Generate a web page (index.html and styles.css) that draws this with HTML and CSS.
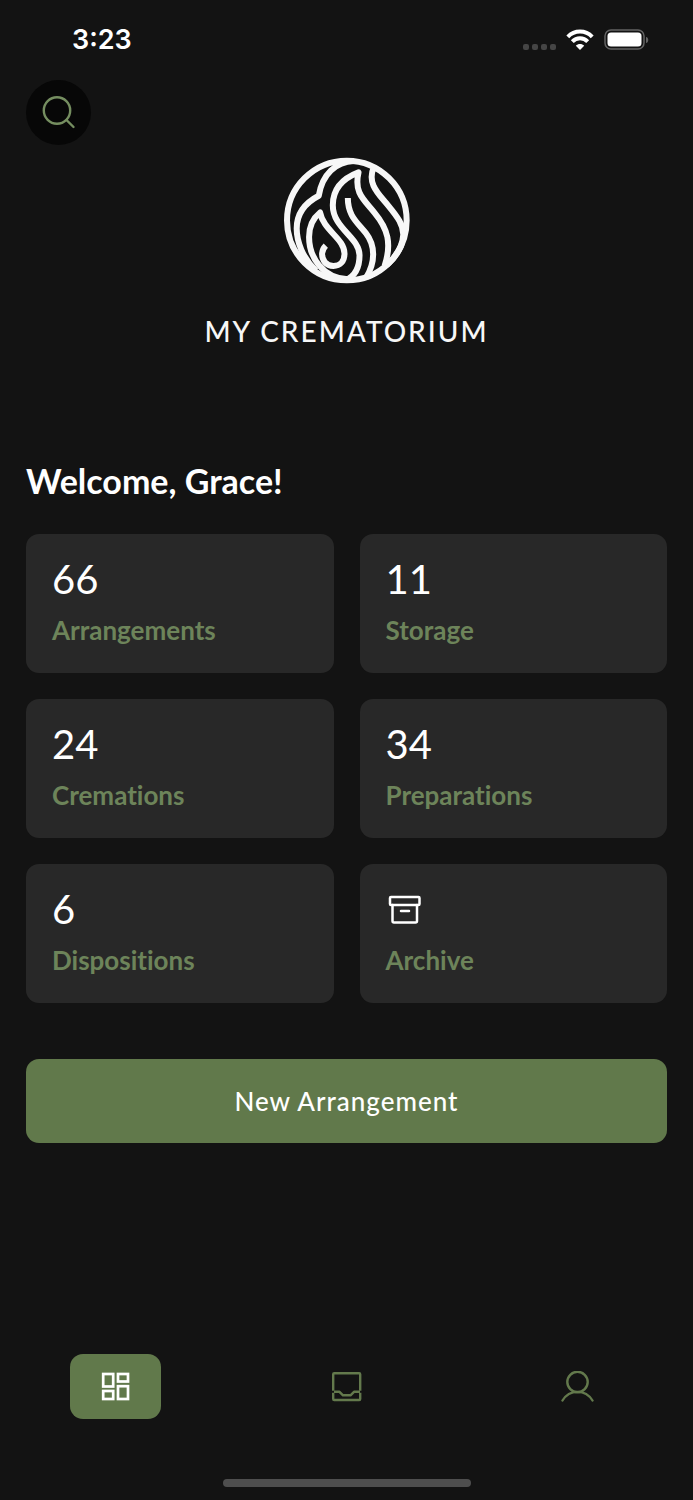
FILE: index.html
```html
<!DOCTYPE html>
<html lang="en">
<head>
	<meta charset="UTF-8">
	<meta name="viewport" content="width=device-width, initial-scale=1">
	<title>My Crematorium</title>
	<link rel="stylesheet" href="styles.css">
</head>
<body>
	<div class="status">
		<span class="time">3:23</span>
		<div class="signals">
			<div class="dots"><i></i><i></i><i></i><i></i></div>
			<svg width="28" height="22" viewBox="0 0 28 22" fill="none" stroke="#fff" stroke-width="4">
				<path d="M1.800 7.800C8.500 0.800 19.500 0.800 26.200 7.800"/>
				<path d="M6.300 12.600C10.500 8.200 17.500 8.200 21.700 12.600"/>
				<path d="M14 21L9.800 16.700C12 14.500 16 14.500 18.200 16.700Z" fill="#fff" stroke="none"/>
			</svg>
			<svg width="46" height="22" viewBox="0 0 46 22">
				<rect x="1" y="1" width="39" height="19" rx="6" fill="none" stroke="#636363" stroke-width="1.500"/>
				<rect x="3.500" y="3.500" width="34" height="14" rx="3.500" fill="#fff"/>
				<path d="M42 8c3 0 3 6 0 6z" fill="#636363"/>
			</svg>
		</div>
	</div>

	<header class="header">
		<button class="search" aria-label="Search">
			<svg width="34" height="34" viewBox="0 0 34 34" fill="none" stroke="#758e60" stroke-width="2.400" stroke-linecap="round">
				<circle cx="15" cy="14.500" r="13.200"/>
				<path d="M24.500 24L31.500 31"/>
			</svg>
		</button>
		<div class="brand">
			<svg class="logo" viewBox="38 36 380 380" fill="none" stroke="#f7f7f7" stroke-width="18" stroke-linejoin="round">
				<circle cx="229" cy="226" r="179"/>
				<!-- outer flame -->
				<path d="M250 48C196 50 155 88 145 152C101 175 79 205 79 250C79 288 96 338 137 376"/>
				<!-- inner flame with the curl -->
				<path d="M232 402C156 398 116 335 116 275C116 240 128 219 149 202C159 256 222 280 222 325C222 349 208 362 189 362C167 362 154 345 155 324C156 314 160 307 166 301"/>
				<!-- tall flame -->
				<path d="M225 405C260 390 267 359 267 330C267 276 187 250 187 180C187 126 222 98 264 82C250 143 279 162 312 203C352 251 364 295 342 362"/>
				<path d="M232 159C232 213 261 232 286 264C314 300 316 350 286 398"/>
				<path d="M310 66C287 117 327 149 354 183C382 217 397 238 398 268C396 302 378 334 348 360"/>
			</svg>
			<span class="brand-name">MY CREMATORIUM</span>
		</div>
	</header>

	<main class="main">
		<h1 class="welcome">Welcome, Grace!</h1>
		<div class="cards">
			<a class="card" href="#arrangements">
				<span class="count">66</span>
				<span class="label">Arrangements</span>
			</a>
			<a class="card" href="#storage">
				<span class="count">11</span>
				<span class="label">Storage</span>
			</a>
			<a class="card" href="#cremations">
				<span class="count">24</span>
				<span class="label">Cremations</span>
			</a>
			<a class="card" href="#preparations">
				<span class="count">34</span>
				<span class="label">Preparations</span>
			</a>
			<a class="card" href="#dispositions">
				<span class="count">6</span>
				<span class="label">Dispositions</span>
			</a>
			<a class="card" href="#archive">
				<span class="count">
					<svg width="36" height="32" viewBox="0 0 36 32" fill="none" stroke="#fff" stroke-width="2.500" stroke-linejoin="round" stroke-linecap="round">
						<rect x="4" y="4" width="29.500" height="8" rx="1"/>
						<path d="M6.500 12V28Q6.500 29.500 8 29.500H29.500Q31 29.500 31 28V12M15 18H23"/>
					</svg>
				</span>
				<span class="label">Archive</span>
			</a>
		</div>
		<button class="new-btn">New Arrangement</button>
	</main>

	<nav class="tabs">
		<a class="tab active" href="#dashboard" aria-label="Dashboard">
			<svg width="30" height="30" viewBox="0 0 30 30" fill="none" stroke="#fff" stroke-width="2.700">
				<rect x="2.200" y="2" width="10" height="12.500"/>
				<rect x="17" y="2" width="10" height="7.500"/>
				<rect x="2.200" y="19" width="10" height="8"/>
				<rect x="17" y="14.200" width="10" height="12.800"/>
			</svg>
		</a>
		<a class="tab" href="#inbox" aria-label="Inbox">
			<svg width="30" height="30" viewBox="0 0 30 30" fill="none" stroke="#63794c" stroke-width="2.400" stroke-linejoin="round">
				<path d="M1.200 18.800V2.200Q1.200 1.200 2.200 1.200H27.200Q28.200 1.200 28.200 2.200V18.800"/>
				<path d="M1.200 20.800V27Q1.200 28 2.200 28H27.200Q28.200 28 28.200 27V20.800"/>
				<path d="M2 19.800H7.500L11 23.300H18.500L22 19.800H28"/>
			</svg>
		</a>
		<a class="tab" href="#profile" aria-label="Profile">
			<svg width="34" height="32" viewBox="0 0 34 32" fill="none" stroke="#63794c" stroke-width="2.400" stroke-linecap="round">
				<circle cx="16.500" cy="11" r="10.200"/>
				<path d="M1.500 29.500C8.500 18 24.500 18 31.500 29.500"/>
			</svg>
		</a>
	</nav>
	<div class="home-bar"></div>
</body>
</html>
```
FILE: styles.css
```css
*{
	box-sizing: border-box;
}
body{
	margin: 0;
	min-height: 100vh;
	display: flex;
	flex-direction: column;
	background: #131313;
	color: #fff;
	font-family: Lato, "Open Sans", sans-serif;
	font-variant-ligatures: none;
}
a{
	color: inherit;
	text-decoration: none;
}
button{
	border: 0;
	padding: 0;
	color: inherit;
	font-family: inherit;
	cursor: pointer;
}
svg{
	display: block;
}

/* status bar */
.status{
	display: flex;
	justify-content: space-between;
	align-items: center;
	height: 80px;
	padding: 0 43px 0 72px;
}
.time{
	font: 600 27px/32px Inter, sans-serif;
}
.signals{
	display: flex;
	align-items: center;
	gap: 10px;
}
.dots{
	display: flex;
	gap: 3px;
	padding-top: 13px;
}
.dots i{
	width: 6px;
	height: 6px;
	border-radius: 2px;
	background: #454545;
}

.header{
	padding: 0 26px;
}
.search{
	display: flex;
	align-items: center;
	justify-content: center;
	width: 65px;
	height: 65px;
	border-radius: 50%;
	background: #070707;
}
.brand{
	display: flex;
	flex-direction: column;
	align-items: center;
	gap: 31px;
	padding-top: 12px;
}
.logo{
	width: 127px;
	height: 127px;
}
.brand-name{
	color: #f7f7f7;
	font-size: 28px;
	line-height: 32px;
	font-weight: 500;
	letter-spacing: 2px;
}

.main{
	padding: 113px 26px 40px;
}
.welcome{
	margin: 0 0 32px;
	font-size: 34px;
	line-height: 42px;
}
.cards{
	display: grid;
	grid-template-columns: 1fr 1fr;
	gap: 26px;
}
.card{
	display: flex;
	flex-direction: column;
	gap: 12px;
	padding: 24px 26px 25px;
	border-radius: 13px;
	background: #282828;
}
.count{
	display: flex;
	align-items: center;
	height: 42px;
	font-size: 40px;
}
.label{
	color: #6d845a;
	font-size: 26px;
	line-height: 36px;
	font-weight: bold;
}
.new-btn{
	width: 100%;
	height: 84px;
	margin-top: 56px;
	border-radius: 13px;
	background: #61794b;
	font-size: 26px;
	font-weight: 500;
	letter-spacing: 1px;
}

/* bottom tabs */
.tabs{
	display: grid;
	grid-template-columns: repeat(3, 1fr);
	justify-items: center;
	margin-top: auto;
}
.tab{
	display: flex;
	align-items: center;
	justify-content: center;
	width: 91px;
	height: 65px;
	border-radius: 13px;
}
.active{
	background: #61794b;
}
.home-bar{
	width: 248px;
	height: 8px;
	margin: 60px auto 13px;
	border-radius: 4px;
	background: #4e4e4e;
}
```
